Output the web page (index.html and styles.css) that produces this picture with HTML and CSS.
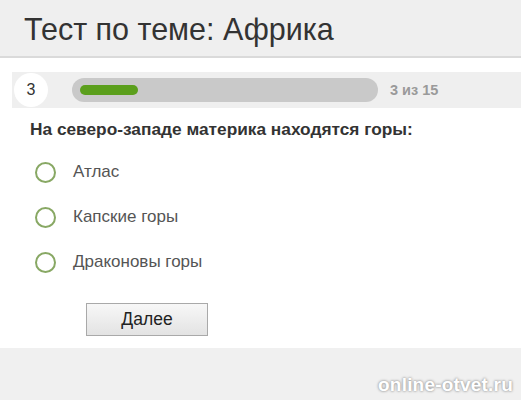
FILE: index.html
```html
<!DOCTYPE html>
<html lang="ru">
<head>
<meta charset="utf-8">
<link rel="stylesheet" href="styles.css">
</head>
<body>
<div class="page">
  <header class="header"><h1 class="title">Тест по теме: Африка</h1></header>
  <main class="content">
    <div class="progress-row">
      <div class="num">3</div>
      <div class="track"><div class="fill" style="width:58px"></div></div>
      <div class="count">3 из 15</div>
    </div>
    <div class="question">На северо-западе материка находятся горы:</div>
    <ul class="options">
      <li class="option"><span class="radio"></span><span class="label">Атлас</span></li>
      <li class="option"><span class="radio"></span><span class="label">Капские горы</span></li>
      <li class="option"><span class="radio"></span><span class="label">Драконовы горы</span></li>
    </ul>
    <div class="actions"><button class="btn">Далее</button></div>
  </main>
  <footer class="footer"><span class="watermark">online-otvet.ru</span></footer>
</div>
</body>
</html>
```

FILE: styles.css
```css
html, body { margin: 0; padding: 0; }
body { width: 521px; height: 400px; overflow: hidden; background: #f0f0f0; font-family: "Liberation Sans", Arial, sans-serif; }
.page { display: flex; flex-direction: column; height: 400px; }
.header { height: 56px; background: #efefef; border-bottom: 2px solid #dadada; display: flex; align-items: center; }
.title { margin: 0 0 0 24px; font-weight: normal; font-size: 30.5px; color: #333; line-height: 1; padding-top: 3px; }
.content { background: #fff; height: 290px; padding-top: 14px; box-sizing: border-box; }
.progress-row { margin-left: 12px; height: 36px; background: #efefef; display: flex; align-items: center; }
.num { width: 34px; height: 34px; margin-left: 2px; border-radius: 50%; background: #fff; display: flex; align-items: center; justify-content: center; font-size: 16px; color: #333; }
.track { margin-left: 24px; width: 306px; height: 24px; border-radius: 12px; background: #c9c9c9; display: flex; align-items: center; padding-left: 8px; box-sizing: border-box; }
.fill { height: 10px; border-radius: 5px; background: #5b9f1c; }
.count { margin-left: 12px; font-size: 14.5px; font-weight: bold; color: #9a9a9a; }
.question { margin: 11px 0 0 30px; font-size: 17.3px; font-weight: bold; color: #333; }
.options { list-style: none; margin: 22px 0 0 0; padding: 0; display: flex; flex-direction: column; gap: 25px; }
.option { display: flex; align-items: center; height: 20px; }
.radio { width: 17px; height: 17px; border: 2px solid #88a864; border-radius: 50%; margin-left: 35px; }
.label { margin-left: 17px; font-size: 17px; color: #555; }
.actions { margin: 31px 0 0 86px; }
.btn { width: 122px; height: 33px; border: 1px solid #a9a9a9; background: linear-gradient(#f7f7f7, #e3e3e3); font-family: "Liberation Sans", Arial, sans-serif; font-size: 17.5px; color: #222; padding: 0; }
.footer { flex: 1; display: flex; justify-content: flex-end; align-items: flex-end; padding: 0 8px 4px 0; }
.watermark { font-size: 19px; font-weight: bold; color: #fff; text-shadow: 0 0 3px #999, 0 0 2px #aaa; letter-spacing: 0.2px; }
```
